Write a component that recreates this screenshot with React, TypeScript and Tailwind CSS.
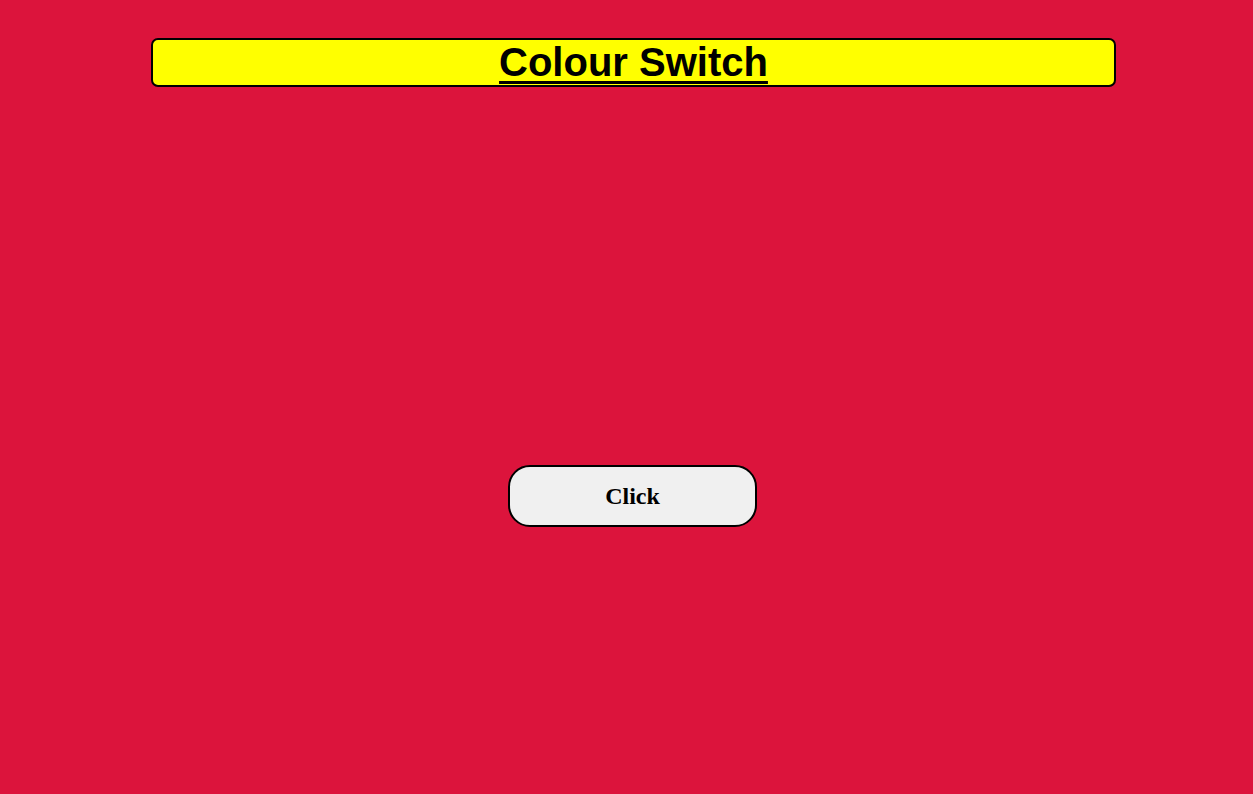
import React from "react";

export default function App() {
  return (
    <div className="min-h-[794px] w-full bg-[#dc143c] pt-[38px]">
      <div className="ml-[151px] w-[965px] rounded-[7px] border-2 border-black bg-[#ffff00] text-center">
        <h1
          className="text-[40px] font-bold leading-[45px] text-black underline decoration-[3px] underline-offset-[5px]"
          style={{ fontFamily: '"Liberation Sans", Arial, sans-serif' }}
        >
          Colour Switch
        </h1>
      </div>
      <div className="ml-[508px] mt-[378px]">
        <button
          className="h-[62px] w-[249px] rounded-[22px] border-2 border-black bg-[#f0f0f0] text-[24px] font-bold text-black"
          style={{ fontFamily: '"Liberation Serif", "Times New Roman", serif' }}
        >
          Click
        </button>
      </div>
    </div>
  );
}
